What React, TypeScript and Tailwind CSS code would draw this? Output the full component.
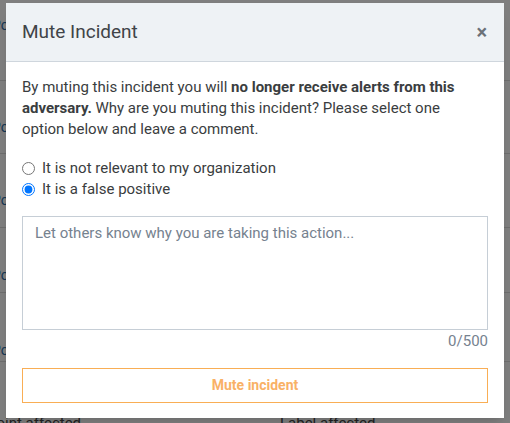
import { useState } from "react";

const rows = [25, 127, 200, 275, 350];
const lines = [80, 153, 227, 292, 361];

function BackdropPage() {
  return (
    <div className="absolute inset-0 bg-white">
      {lines.map((y) => (
        <div key={y} className="absolute left-0 right-0 h-px bg-[#dcdcdc]" style={{ top: y }} />
      ))}
      {rows.map((y) => (
        <span key={y} className="absolute left-[-8px] text-[14px] text-[#2f6ea8]" style={{ top: y - 10 }}>
          Poi
        </span>
      ))}
      <span className="absolute left-[-12px] top-[412px] text-[15px] text-[#444]">point affected</span>
      <span className="absolute left-[280px] top-[412px] text-[15px] text-[#444]">Label affected</span>
    </div>
  );
}

export default function App() {
  const [reason, setReason] = useState("false");
  const [comment, setComment] = useState("");

  return (
    <div
      className="relative h-[423px] w-[510px] overflow-hidden"
      style={{ fontFamily: "Roboto, 'Liberation Sans', sans-serif" }}
    >
      <BackdropPage />
      <div className="absolute inset-0 bg-black/50" />

      <div className="absolute left-[6px] top-[3px] flex h-[415px] w-[498px] flex-col bg-white shadow-lg">
        <div className="flex h-[59px] items-center justify-between border-b border-[#cfd6dd] bg-[#eef2f5] pl-4 pr-[17px]">
          <h2 className="text-[19px] text-[#404448]">Mute Incident</h2>
          <button className="text-[20px] font-bold leading-none text-[#6b7178]">×</button>
        </div>

        <div className="flex flex-col px-4 pt-[15px]">
          <p className="max-w-[460px] text-[15px] leading-[21px] text-[#3a3d40]">
            By muting this incident you will <b className="font-bold">no longer receive alerts from this adversary.</b> Why are
            you muting this incident? Please select one option below and leave a comment.
          </p>

          <div className="mt-[18px] flex flex-col text-[15px] leading-[21px] text-[#3a3d40]">
            <label className="flex items-center gap-[7px]">
              <input
                type="radio"
                name="reason"
                className="m-0 h-[13px] w-[13px]"
                checked={reason === "relevant"}
                onChange={() => setReason("relevant")}
              />
              It is not relevant to my organization
            </label>
            <label className="flex items-center gap-[7px]">
              <input
                type="radio"
                name="reason"
                className="m-0 h-[13px] w-[13px]"
                checked={reason === "false"}
                onChange={() => setReason("false")}
              />
              It is a false positive
            </label>
          </div>

          <textarea
            className="mt-[16px] h-[114px] w-full resize-none border border-[#c6ced6] px-3 py-[6px] text-[15px] leading-[21px] text-[#3a3d40] outline-none placeholder:text-[#76828f]"
            placeholder="Let others know why you are taking this action..."
            value={comment}
            onChange={(e) => setComment(e.target.value)}
          />
          <div className="mt-[1px] text-right text-[15px] leading-[21px] text-[#76828f]">{comment.length}/500</div>

          <button className="mt-[16px] h-[35px] w-full border border-[#f9ae55] text-[14px] font-bold text-[#f9b166]">
            Mute incident
          </button>
        </div>
      </div>
    </div>
  );
}
